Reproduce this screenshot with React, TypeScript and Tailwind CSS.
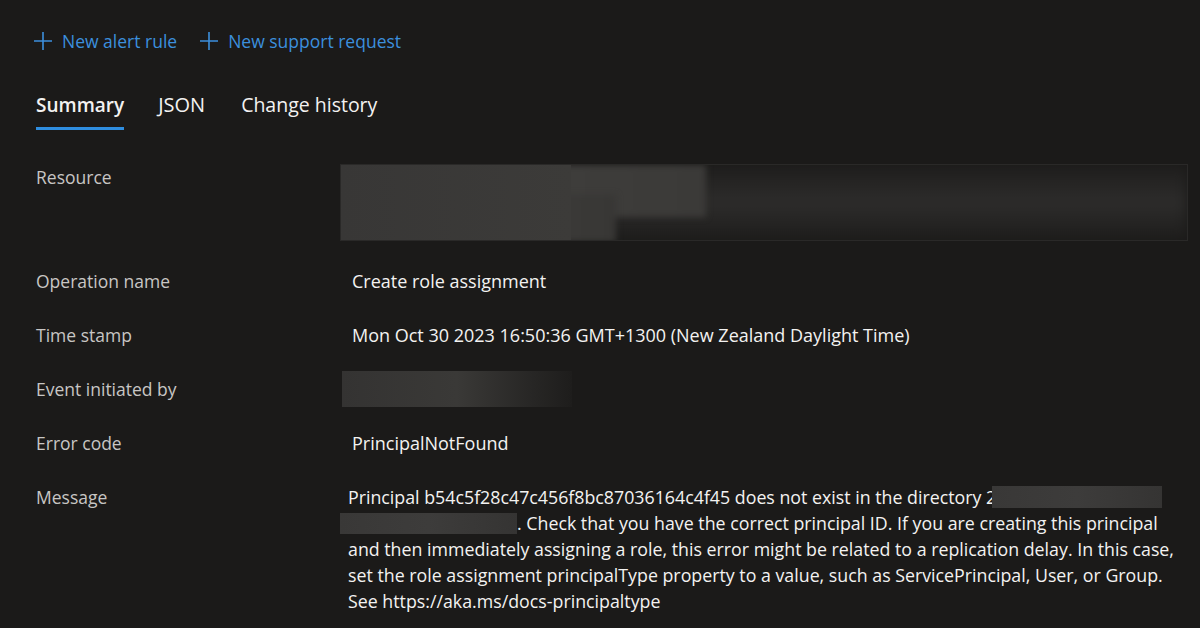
import React from "react";

const Plus = () => (
	<svg width="20" height="20" viewBox="0 0 20 20" className="shrink-0">
		<path d="M10 1v18M1 10h18" stroke="#3c8fdd" strokeWidth="1.6" />
	</svg>
);

const Row = ({ label, children, className = "" }: { label: string; children: React.ReactNode; className?: string }) => (
	<div className={"flex " + className}>
		<div className="w-[304px] shrink-0 text-[#c8c6c4]">{label}</div>
		<div className="flex-1 text-[#f3f2f1] text-[18px]">{children}</div>
	</div>
);

const Redacted = ({ className = "" }: { className?: string }) => (
	<span className={"inline-block align-middle bg-gradient-to-r from-[#393837] via-[#3d3c3b] to-[#353433] " + className} />
);

const App = () => {
	return (
		<div className="w-[1200px] h-[628px] overflow-hidden bg-[#1b1a19] text-[17.5px] leading-[24px]" style={{ fontFamily: '"Open Sans", "Noto Sans", sans-serif' }}>
			<div className="flex items-center pl-[33px] pt-[29px]">
				<Plus />
				<span className="ml-[9px] text-[#3c8fdd]">New alert rule</span>
				<span className="ml-[22px]"><Plus /></span>
				<span className="ml-[9px] text-[#3c8fdd]">New support request</span>
			</div>

			<div className="flex items-start pl-[36px] mt-[40px] text-[#f3f2f1]">
				<div className="flex flex-col">
					<span className="font-semibold text-[19px]">Summary</span>
					<span className="mt-[10px] h-[3px] bg-[#2f8ee0]" />
				</div>
				<span className="ml-[34px] text-[20px]">JSON</span>
				<span className="ml-[36px] text-[19.5px]">Change history</span>
			</div>

			<div className="pl-[36px] mt-[35px] flex flex-col">
				<Row label="Resource">
					{/* redacted resource id */}
					<div className="relative -mt-[1px] h-[77px] w-[848px] overflow-hidden border border-[#2a2928]">
						<div className="absolute inset-0 bg-gradient-to-b from-[#1f1e1d] via-[#2d2c2b] to-[#1e1d1c] blur-[6px]" />
						<div className="absolute left-0 top-0 h-[52px] w-[365px] bg-gradient-to-r from-[#393837] via-[#3f3e3c] to-[#3b3a38] blur-[3px]" />
						<div className="absolute left-0 top-[30px] h-[47px] w-[275px] bg-gradient-to-r from-[#393837] via-[#3e3d3b] to-[#383735] blur-[3px]" />
						<div className="absolute left-0 top-0 h-full w-[230px] bg-gradient-to-r from-[#383736] to-[#3c3b39]" />
					</div>
				</Row>
				<Row label="Operation name" className="mt-[28px]">
					<span className="pl-[12px]">Create role assignment</span>
				</Row>
				<Row label="Time stamp" className="mt-[30px]">
					<span className="pl-[12px]">Mon Oct 30 2023 16:50:36 GMT+1300 (New Zealand Daylight Time)</span>
				</Row>
				<Row label="Event initiated by" className="mt-[30px]">
					<div className="h-[24px]">
						<div className="-mt-[6px] ml-[2px] h-[36px] w-[230px] bg-gradient-to-r from-[#343332] via-[#3a3937] to-[#1e1d1c]" />
					</div>
				</Row>
				<Row label="Error code" className="mt-[30px]">
					<span className="pl-[12px]">PrincipalNotFound</span>
				</Row>
				<Row label="Message" className="mt-[30px]">
					<div className="pl-[8px] w-[836px] leading-[26px] text-[17.8px] -mt-[1px]">
						Principal b54c5f28c47c456f8bc87036164c4f45 does not exist in the directory 2<Redacted className="h-[22px] w-[170px] -ml-[4px] -mt-[4px]" />
						<br />
						<Redacted className="h-[21px] w-[177px] -ml-[8px] -mt-[4px]" />. Check that you have the correct principal ID. If you are creating this principal and then immediately assigning a role, this error might be related to a replication delay. In this case, set the role assignment principalType property to a value, such as ServicePrincipal, User, or Group. See https://aka.ms/docs-principaltype
					</div>
				</Row>
			</div>
		</div>
	);
};

export default App;
